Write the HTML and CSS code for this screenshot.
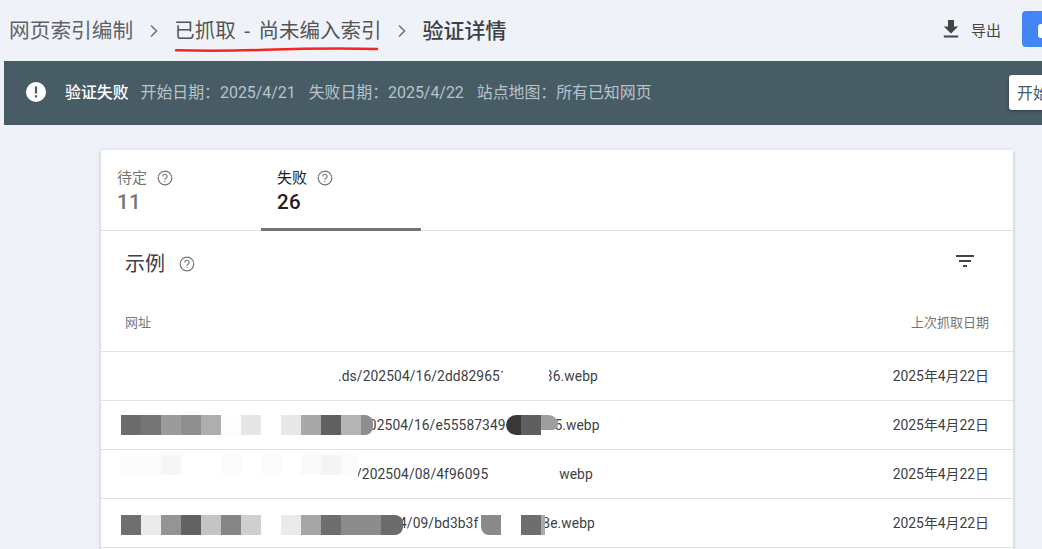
FILE: index.html
```html
<!DOCTYPE html>
<html lang="zh-CN">
<head>
<meta charset="utf-8">
<title>验证详情</title>
<link rel="stylesheet" href="styles.css">
</head>
<body>
<div class="page">
  <header class="topbar">
    <nav class="crumbs">
      <span class="crumb">网页索引编制</span>
      <svg class="chev" viewBox="0 0 10 14"><path d="M2 1.500 7.500 7 2 12.500" fill="none" stroke="#777" stroke-width="1.700"/></svg>
      <span class="crumb crumb-mid">已抓取 - 尚未编入索引</span>
      <svg class="chev" viewBox="0 0 10 14"><path d="M2 1.500 7.500 7 2 12.500" fill="none" stroke="#777" stroke-width="1.700"/></svg>
      <span class="crumb crumb-cur">验证详情</span>
    </nav>
    <div class="actions">
      <svg class="dl" viewBox="0 0 16 18"><path d="M5 0h6v6.500h4.200L8 13.500.800 6.500H5zM.800 15.500h14.400v2H.800z" fill="#444"/></svg>
      <span class="export">导出</span>
      <div class="blue"><span class="blue-chip"></span></div>
    </div>
  </header>
  <svg class="scribble" viewBox="0 0 204 6"><path d="M1 4.300C30 5 60 4.800 90 3.800S170 2 202 3" fill="none" stroke="#f5261f" stroke-width="2.500" stroke-linecap="round"/></svg>

  <section class="banner">
    <svg class="alert" viewBox="0 0 20 20"><circle cx="10" cy="10" r="10" fill="#fff"/><path d="M8.900 4.500h2.200v7H8.900zM8.900 13.200h2.200v2.200H8.900z" fill="#485c66"/></svg>
    <strong class="b-title">验证失败</strong>
    <span class="b-item">开始日期：2025/4/21</span>
    <span class="b-item">失败日期：2025/4/22</span>
    <span class="b-item">站点地图：所有已知网页</span>
    <button class="start">开始新的验证</button>
  </section>

  <main class="card">
    <div class="tabs">
      <div class="tab">
        <div class="tab-label">待定<svg class="help" viewBox="0 0 16 16"><use href="#q"/></svg></div>
        <div class="tab-num">11</div>
      </div>
      <div class="tab tab-on">
        <div class="tab-label">失败<svg class="help" viewBox="0 0 16 16"><use href="#q"/></svg></div>
        <div class="tab-num">26</div>
      </div>
    </div>
    <div class="sec-head">
      <h2 class="sec-title">示例</h2>
      <svg class="help help-sec" viewBox="0 0 16 16"><use href="#q"/></svg>
      <svg class="filter" viewBox="0 0 18 12"><path d="M0 0h18v2H0zM3 5h12v2H3zM7 10h4v2H7z" fill="#444"/></svg>
    </div>
    <div class="row row-head"><span>网址</span><span>上次抓取日期</span></div>
    <div class="row r1"><span class="url">.ds/202504/16/2dd829651<i class="gap"></i>36.webp</span><span class="date">2025年4月22日</span><i class="mask m1"></i></div>
    <div class="row r2"><span class="url">202504/16/e55587349<i class="gap"></i>555.webp</span><span class="date">2025年4月22日</span><i class="mosaic m2a"></i><i class="mosaic m2b"></i><i class="mosaic m2c"></i></div>
    <div class="row r3"><span class="url">/202504/08/4f96095<i class="gap"></i>webp</span><span class="date">2025年4月22日</span><i class="mosaic m3a"></i></div>
    <div class="row r4"><span class="url">4/09/bd3b3f<i class="gap"></i>8e.webp</span><span class="date">2025年4月22日</span><i class="mosaic m4a"></i><i class="mosaic m4b"></i></div>
  </main>
</div>
<svg class="defs" width="0" height="0"><defs><g id="q"><circle cx="8" cy="8" r="6.800" fill="none" stroke="#777" stroke-width="1.200"/><path d="M5.900 6.400a2.100 2.100 0 1 1 3.300 1.700c-.8.5-1.200.9-1.200 1.700" fill="none" stroke="#777" stroke-width="1.200"/><path d="M7.400 10.900h1.200v1.200H7.400z" fill="#777"/></g></defs></svg>
</body>
</html>
```

FILE: styles.css
```css
* { box-sizing: border-box; }
html, body { margin: 0; height: 100%; overflow: hidden; }
body {
  background: #eff3f9;
  font-family: Roboto, "Noto Sans CJK SC", sans-serif;
  color: #333;
}
.page { position: relative; height: 549px; overflow: hidden; }
.defs { position: absolute; }

.topbar { height: 61px; display: flex; align-items: center; padding-left: 9px; }
.crumbs { display: flex; align-items: center; }
.crumb { font-size: 20.700px; line-height: 28px; color: #5f6368; white-space: nowrap; }
.crumb-mid { color: #555; font-size: 20.500px; margin-left: 15px; word-spacing: 3.500px; }
.crumb-cur { color: #3c4043; font-size: 21px; font-weight: 500; margin-left: 15px; }
.chev { width: 10px; height: 14px; margin-left: 16px; }
.actions { display: flex; align-items: center; margin-left: auto; margin-right: -20px; margin-bottom: 3px; }
.dl { width: 16px; height: 18px; }
.export { font-size: 15px; color: #444; margin-left: 12px; }
.blue { width: 40px; height: 36px; margin-left: 21px; background: #4285f4; border-radius: 4px; padding: 13px 0 0 16px; }
.blue-chip { display: block; width: 20px; height: 14px; background: #fff; border-radius: 3px; }
.scribble { position: absolute; left: 175px; top: 46px; width: 204px; height: 6px; }

.banner {
  margin-left: 4px; width: 1100px; height: 64px; background: #485c66;
  display: flex; align-items: center; padding: 0 0 3px 22px; position: relative;
  font-size: 15.900px; color: #b9c3c8; white-space: nowrap;
}
.alert { width: 20px; height: 20px; margin-right: 19px; }
.b-title { color: #fff; font-weight: 500; margin-right: 12px; }
.b-item { margin-right: 13px; }
.start {
  position: absolute; left: 1005px; top: 14px; height: 35px; width: 120px;
  background: #fff; border: 0; border-radius: 3px; text-align: left;
  padding: 0 8px; font: inherit; color: #485c66; box-shadow: 0 1px 3px rgba(0,0,0,.35);
}

.card {
  margin: 25px 0 0 101px; width: 912px; height: 420px; background: #fff;
  box-shadow: 0 1px 4px rgba(60,64,67,.3);
}
.tabs { display: flex; height: 81px; border-bottom: 1px solid #dfe1e5; }
.tab { width: 160px; padding: 18px 16px 0; color: #757575; }
.tab-on { color: #202124; border-bottom: 3px solid #757575; height: 81px; }
.tab-label { display: flex; align-items: center; font-size: 15px; line-height: 20px; }
.tab-num { font-size: 20.500px; line-height: 28px; font-weight: 500; letter-spacing: .4px; }
.help { width: 16px; height: 16px; margin-left: 10px; }
.sec-head { height: 65px; display: flex; align-items: center; padding: 0 39px 0 24px; }
.sec-title { margin: 0; font-size: 20px; font-weight: 400; color: #3c4043; line-height: 28px; }
.help-sec { margin-left: 14px; }
.filter { width: 18px; height: 12px; margin-left: auto; margin-bottom: 5px; }

.row {
  position: relative; height: 49px; display: flex; align-items: center;
  justify-content: space-between; padding: 0 24px;
  border-bottom: 1px solid #dfe1e5; font-size: 13px; color: #3c4043;
}
.row-head { height: 56px; color: #757575; font-size: 13px; padding-bottom: 5px; }
.date { font-size: 13.900px; margin-bottom: 2px; }
.url { white-space: nowrap; font-size: 13.800px; display: flex; letter-spacing: .1px; }
.gap { display: block; }
.r1 .url { margin-left: 213px; }
.r1 .gap { width: 37px; }
.r2 .url { margin-left: 236px; }
.r2 .gap { width: 33px; }
.r3 .url { margin-left: 231px; }
.r3 .gap { width: 71px; }
.r4 .url { margin-left: 274px; }
.r4 .gap { width: 64px; }

.mask { position: absolute; left: 402px; top: 12px; width: 46px; height: 24px; background: #fff; }
.mosaic { position: absolute; display: block; }
.m2a {
  left: 20px; top: 14px; width: 252px; height: 20px; border-radius: 0 8px 8px 0;
  background: linear-gradient(90deg, #6b6b6b 0 20px, #757575 20px 40px, #9b9b9b 40px 60px, #8f8f8f 60px 80px, #aeaeae 80px 100px, #fdfdfd 100px 120px, #e6e6e6 120px 140px, #fff 140px 160px, #e8e8e8 160px 180px, #a8a8a8 180px 200px, #606060 200px 220px, #b4b4b4 220px 240px, #8e8e8e 240px 252px);
}
.m2b {
  left: 405px; top: 14px; width: 35px; height: 20px; border-radius: 10px 0 0 10px;
  background: linear-gradient(90deg, #383838 0 15px, #5f5f5f 15px 35px);
}
.m2c {
  left: 440px; top: 14px; width: 17px; height: 15px; border-radius: 0 10px 6px 0;
  background: #9e9e9e;
}
.m3a {
  left: 20px; top: 5px; width: 237px; height: 30px;
  background: linear-gradient(90deg, #fcfcfc 0 40px, #f6f6f6 40px 60px, #fff 60px 100px, #fbfbfb 100px 120px, #fff 120px 140px, #fbfbfb 140px 160px, #fff 160px 180px, #fafafa 180px 200px, #f4f4f4 200px 220px, #fbfbfb 220px 237px) top left / 100% 20px no-repeat #fff;
}
.m4a {
  left: 20px; top: 16px; width: 282px; height: 20px; border-radius: 0 8px 8px 0;
  background: linear-gradient(90deg, #6f6f6f 0 20px, #ebebeb 20px 40px, #949494 40px 60px, #626262 60px 80px, #c4c4c4 80px 100px, #868686 100px 120px, #cfcfcf 120px 140px, #fff 140px 160px, #ebebeb 160px 180px, #a6a6a6 180px 200px, #6e6e6e 200px 220px, #8c8c8c 220px 260px, #6c6c6c 260px 282px);
}
.m4b {
  left: 380px; top: 16px; width: 64px; height: 20px; border-radius: 0 0 0 8px;
  background: linear-gradient(90deg, #8a8a8a 0 20px, #fff 20px 40px, #6e6e6e 40px 60px, #aaa 60px 64px);
}
```
